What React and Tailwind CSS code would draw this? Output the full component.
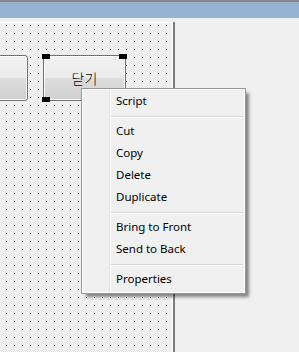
const menuGroups = [
  ["Script"],
  ["Cut", "Copy", "Delete", "Duplicate"],
  ["Bring to Front", "Send to Back"],
  ["Properties"],
];

function FormButton({ label, selected, className = "" }) {
  return (
    <div className={"relative h-[46px] w-[83px] shrink-0 " + className}>
      <div className="flex h-full w-full items-center justify-center rounded-[3px] border border-[#707070] bg-[linear-gradient(#f2f2f2,#ebebeb_50%,#dddddd_50%,#cfcfcf)] shadow-[inset_0_0_0_1px_#fbfbfb] font-['Noto_Sans_CJK_KR',sans-serif] text-[14px] font-light text-black">
        {label}
      </div>
      {selected && (
        <>
          <span className="absolute -left-px -top-px h-[5px] w-[8px] bg-black" />
          <span className="absolute -right-px -top-px h-[5px] w-[8px] bg-black" />
          <span className="absolute -bottom-px -left-px h-[5px] w-[8px] bg-black" />
          <span className="absolute -bottom-px -right-px h-[5px] w-[8px] bg-black" />
        </>
      )}
    </div>
  );
}

function ContextMenu() {
  return (
    <div className="absolute left-[81px] top-[88px] w-[165px] border border-[#979797] bg-[#f0f0f0] shadow-[4px_4px_3px_-1px_rgba(0,0,0,0.45)]">
      <div className="flex border border-[#fcfcfc]">
        <div className="w-[26px]" />
        <div className="w-px bg-[#e2e3e3]" />
        <div className="w-px bg-white" />
        <div className="flex-1 pb-[2px] font-['Noto_Sans',sans-serif] text-[11.5px] text-black">
          {menuGroups.map((group, gi) => (
            <div key={gi}>
              {gi > 0 && (
                <div className="h-[8px] pt-[4px] pr-px">
                  <div className="h-px bg-[#d7d7d7]" />
                  <div className="h-px bg-white" />
                </div>
              )}
              {group.map((item) => (
                <div key={item} className="flex h-[22px] items-center pl-[5px] leading-none">
                  {item}
                </div>
              ))}
            </div>
          ))}
        </div>
      </div>
    </div>
  );
}

export default function App() {
  return (
    <div className="relative flex h-[352px] w-[299px] flex-col overflow-hidden bg-[#f0f0f0]">
      <div className="h-[2px] bg-[#878787]" />
      <div className="h-[16px] bg-[#96b3d3]" />
      <div className="h-[4px]" />
      <div className="flex flex-1">
        <div className="w-[175px] border-r-2 border-[#7a7a7a]">
          <div className="h-full border-r border-t border-white bg-[conic-gradient(at_1px_1px,transparent_75%,#000_0)] bg-size-[8px_8px] bg-position-[6px_2px] pt-[32px]">
            <div className="flex gap-[15px]">
              <FormButton label="열기" className="-ml-[55px]" />
              <FormButton label="닫기" selected />
            </div>
          </div>
        </div>
      </div>
      <ContextMenu />
    </div>
  );
}
